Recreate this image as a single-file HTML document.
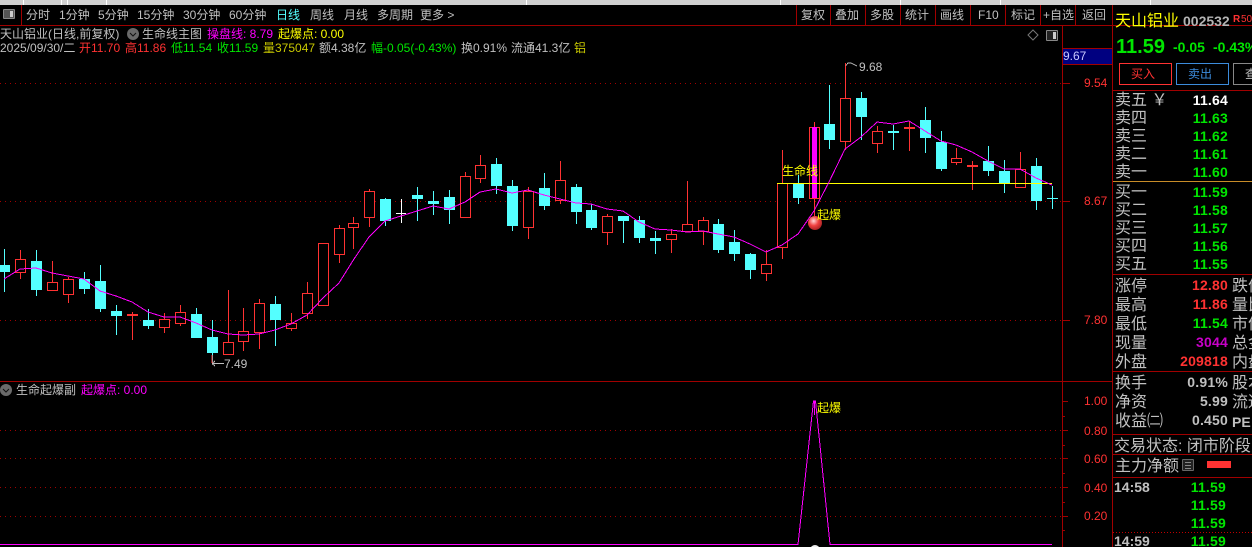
<!DOCTYPE html>
<html><head><meta charset="utf-8"><style>
html,body{margin:0;padding:0;background:#000;width:1252px;height:547px;overflow:hidden}
#p{position:relative;width:1252px;height:547px;overflow:hidden;background:#000;font:12px/16px "Liberation Sans","WenQuanYi Zen Hei","Noto Sans CJK SC",sans-serif;color:#c0c0c0}
#p span{position:absolute;white-space:nowrap}
.r{color:#ff3232}.g{color:#00e600}.y{color:#ffff00}.m{color:#ff00ff}.c{color:#54ffff}.d{color:#c8c800}
.n{font-size:16px;margin-top:1px}
.n2{font-size:16px;margin-top:2px}
.v{font-weight:bold;font-size:14px;text-align:right;width:80px;left:1148px;letter-spacing:.2px}
svg{position:absolute;left:0;top:0}
</style></head><body><div id="p">
<svg width="1252" height="547" shape-rendering="crispEdges">
<rect width="1252" height="5" fill="#d0d0d0"/>
<path d="M23.5 0V5M61.5 0V5M67.5 0V5M106.5 0V5M526.5 0V5M780.5 0V5M900.5 0V5M1000.5 0V5M1150.5 0V5" stroke="#fff"/>
<g fill="none" stroke="#a00000" stroke-dasharray="1 4">
<path d="M0 83.5H1062M0 201.5H1062M0 320.5H1062M0 430.5H1062M0 458.5H1062M0 487.5H1062M0 516.5H1062"/>
</g>
<path d="M1062.5 25V547M1112.5 25V547M0 381.5H1112M1062 48.5H1112M1062 64.5H1112M0 25.5H1252M21.5 5V25M796.5 5V25M830.5 5V25M865.5 5V25M900.5 5V25M935.5 5V25M970.5 5V25M1005.5 5V25M1040.5 5V25M1075.5 5V25M1112.5 5V25M1112 90.5H1252M1112 274.5H1252M1112 371.5H1252M1112 434.5H1252M1112 454.5H1252M1112 477.5H1252M1062 83.5H1070M1062 201.5H1070M1062 320.5H1070M1062 401.5H1068M1062 416.5H1065M1062 430.5H1068M1062 445.5H1065M1062 458.5H1068M1062 473.5H1065M1062 487.5H1068M1062 502.5H1065M1062 516.5H1068M1062 530.5H1065" stroke="#a00000" fill="none"/>
<path d="M1113 532.5H1252" stroke="#c00000" stroke-dasharray="1 2"/>
<rect x="1063" y="49" width="49" height="15" fill="#000080"/>
<path d="M1113 181.5H1252" stroke="#c88c28"/>
<!-- cyan wicks -->
<path fill="none" stroke="#54ffff" d="M4.5 249V292M36.5 250V296M84.5 272V294M100.5 265V312M116.5 305V335M148.5 309V329M196.5 308V338M212.5 320V363M275.5 296V346M385.5 198V226M417.5 187V221M433.5 191V215M449.5 190V224M496.5 158V194M512.5 180V231M544.5 173V210M576.5 184V224M591.5 204V230M623.5 216V243M639.5 216V243M655.5 231V254M718.5 219V253M734.5 230V261M750.5 253V279M798.5 175V204M829.5 85V149M861.5 92V140M893.5 125V150M925.5 107V153M941.5 131V171M988.5 146V176M1004.5 160V193M1036.5 158V210M1052.5 186V209M1047 198.5H1058"/>
<!-- cyan bodies -->
<path fill="none" stroke="#54ffff" stroke-width="11" d="M4.5 265V272M36.5 261V290M84.5 279V289M100.5 281V309M116.5 311V316M148.5 320V326M196.5 314V338M212.5 337V353M275.5 304V320M385.5 199V221M417.5 195V199M433.5 201V204M449.5 197V210M496.5 164V186M512.5 186V226M544.5 188V206M576.5 187V212M591.5 210V228M623.5 216V221M639.5 220V238M655.5 238V241M718.5 224V250M734.5 242V254M750.5 254V270M798.5 183V198M829.5 124V140M861.5 98V117M893.5 131V133M925.5 120V138M941.5 142V169M988.5 161V171M1004.5 171V183M1036.5 166V201"/>
<!-- red wicks -->
<path fill="none" stroke="#ff3232" d="M20.5 250V279M52.5 261V290M68.5 277V303M132.5 312V340M164.5 313V333M180.5 305V326M228.5 290V355M243.5 308V351M259.5 299V349M291.5 313V331M307.5 282V319M339.5 225V263M353.5 217V249M369.5 189V227M465.5 172V217M480.5 155V183M528.5 187V239M560.5 161V204M607.5 214V245M671.5 229V253M687.5 181V232M703.5 217V245M766.5 250V281M782.5 150V259M814.5 122V216M845.5 63V150M877.5 126V153M909.5 121V151M956.5 148V165M972.5 161V190M1020.5 152V187"/>
<!-- red bodies -->
<path fill="#000" stroke="#ff3232" d="M15.5 259.5h10v13h-10zM47.5 282.5h10v8h-10zM63.5 279.5h10v15h-10zM159.5 319.5h10v8h-10zM175.5 312.5h10v11h-10zM223.5 342.5h10v12h-10zM238.5 331.5h10v10h-10zM254.5 303.5h10v29h-10zM286.5 323.5h10v5h-10zM302.5 293.5h10v20h-10zM318.5 243.5h10v62h-10zM334.5 228.5h10v26h-10zM348.5 223.5h10v4h-10zM364.5 191.5h10v26h-10zM460.5 176.5h10v41h-10zM475.5 165.5h10v13h-10zM523.5 191.5h10v36h-10zM555.5 180.5h10v20h-10zM602.5 216.5h10v16h-10zM666.5 234.5h10v5h-10zM682.5 224.5h10v7h-10zM698.5 220.5h10v11h-10zM761.5 264.5h10v9h-10zM777.5 183.5h10v64h-10zM809.5 127.5h10v71h-10zM840.5 98.5h10v43h-10zM872.5 131.5h10v12h-10zM951.5 158.5h10v4h-10zM1015.5 169.5h10v18h-10z"/>
<path fill="none" stroke="#ff3232" stroke-width="2" d="M127 315H138M904 128H915M967 166H978"/>
<rect x="812" y="127" width="5" height="71" fill="#ff00ff"/>
<!-- white doji -->
<path fill="none" stroke="#fff" d="M401.5 199V223M396 213.5H406"/>
<!-- life line -->
<path fill="none" stroke="#ffff00" d="M777 183.5H1052"/>
<polyline fill="none" stroke="#ff00ff" points="4,279 20,269 36,268 52,273 68,276 84,279 100,291 116,296 132,302 148,312 164,317 180,317 196,323 212,330 228,334 243,335 259,334 275,330 291,324 307,315 323,298 339,283 354,259 369,237 385,221 401,216 417,211 433,206 449,209 465,202 480,192 496,189 512,193 528,190 544,195 560,199 576,203 591,204 607,209 623,211 639,222 655,229 671,230 687,232 703,231 718,234 734,237 750,244 766,252 782,245 798,234 814,211 829,182 845,149 861,137 877,122 893,124 909,121 925,131 941,141 956,145 972,152 988,161 1004,169 1020,169 1036,178 1052,185"/>
<!-- sub chart -->
<polyline fill="none" stroke="#ff00ff" points="0,544.5 798,544.5 813.5,401 815.5,401 830,544.5 1052,544.5"/>
<path fill="none" stroke="#ff00ff" d="M814.5 401V415" />
<defs><radialGradient id="b" cx=".4" cy=".35" r=".7"><stop offset="0" stop-color="#ffd8d8"/><stop offset=".5" stop-color="#f04040"/><stop offset="1" stop-color="#a02020"/></radialGradient></defs>
<circle cx="815" cy="223" r="7" fill="url(#b)" shape-rendering="auto"/>
<circle cx="815" cy="550" r="5" fill="#eee" shape-rendering="auto"/>
<!-- arrows -->
<path fill="none" stroke="#c0c0c0" d="M846 65.5L848 63H851L857 66M212 363.5H224M212 363.5L215 361M212 363.5L215 366"/>
<path fill="none" stroke="#ff3232" d="M212 355V363"/>
<!-- icons -->
<rect x="3.5" y="9.5" width="11" height="9" rx="1" fill="#555" stroke="#888"/><rect x="10" y="11" width="3" height="6" fill="#ccc"/>
<path d="M1033 30L1038 35L1033 40L1028 35Z" fill="none" stroke="#777" shape-rendering="auto"/>
<rect x="1046.5" y="30.5" width="11" height="10" rx="1" fill="#222" stroke="#888"/><rect x="1053" y="32" width="3" height="7" fill="#ccc"/>
<circle cx="133" cy="34" r="6" fill="#6a6a6a" shape-rendering="auto"/><path d="M130 33L133 36L136 33" fill="none" stroke="#111" shape-rendering="auto"/>
<circle cx="6" cy="390" r="6" fill="#6a6a6a" shape-rendering="auto"/><path d="M3 389L6 392L9 389" fill="none" stroke="#111" shape-rendering="auto"/>
<rect x="1182.5" y="459.5" width="11" height="11" rx="1" fill="#222" stroke="#666"/><path d="M1185 462.5H1191M1185 465.5H1191M1185 468.5H1191" stroke="#888"/>
<rect x="1207" y="461" width="24" height="7" fill="#ff3232"/>
<!-- buttons -->
<rect x="1119.5" y="63.5" width="52" height="21" fill="none" stroke="#ff3232"/>
<rect x="1176.5" y="63.5" width="52" height="21" fill="none" stroke="#3c8cdc"/>
<rect x="1233.5" y="63.5" width="30" height="21" fill="none" stroke="#888"/>
</svg>

<!-- toolbar -->
<span style="left:26px;top:7px">分时</span><span style="left:59px;top:7px">1分钟</span><span style="left:98px;top:7px">5分钟</span><span style="left:137px;top:7px">15分钟</span><span style="left:183px;top:7px">30分钟</span><span style="left:229px;top:7px">60分钟</span><span class="c" style="left:276px;top:7px">日线</span><span style="left:310px;top:7px">周线</span><span style="left:344px;top:7px">月线</span><span style="left:377px;top:7px">多周期</span><span style="left:420px;top:7px">更多 &gt;</span>
<span style="left:801px;top:7px">复权</span><span style="left:835px;top:7px">叠加</span><span style="left:870px;top:7px">多股</span><span style="left:905px;top:7px">统计</span><span style="left:940px;top:7px">画线</span><span style="left:978px;top:7px">F10</span><span style="left:1011px;top:7px">标记</span><span style="left:1043px;top:7px">+自选</span><span style="left:1082px;top:7px">返回</span>
<!-- info -->
<span style="left:0;top:26px">天山铝业(日线,前复权)</span><span style="left:142px;top:26px">生命线主图</span><span class="m" style="left:207px;top:26px">操盘线: 8.79</span><span class="y" style="left:278px;top:26px">起爆点: 0.00</span>
<span style="left:0;top:40px">2025/09/30/二</span><span class="r" style="left:79px;top:40px">开11.70</span><span class="r" style="left:125px;top:40px">高11.86</span><span class="g" style="left:171px;top:40px">低11.54</span><span class="g" style="left:217px;top:40px">收11.59</span><span class="d" style="left:263px;top:40px">量375047</span><span style="left:319px;top:40px">额4.38亿</span><span class="g" style="left:371px;top:40px">幅-0.05(-0.43%)</span><span style="left:461px;top:40px">换0.91%</span><span style="left:511px;top:40px">流通41.3亿</span><span class="d" style="left:574px;top:40px">铝</span>
<!-- chart labels -->
<span style="left:859px;top:59px">9.68</span><span style="left:224px;top:356px">7.49</span>
<span class="y" style="left:782px;top:163px">生命线</span><span class="y" style="left:817px;top:207px">起爆</span><span class="y" style="left:817px;top:400px">起爆</span>
<span style="left:1063px;top:48px;color:#c8c8ff">9.67</span>
<span class="r" style="left:1084px;top:75px">9.54</span><span class="r" style="left:1084px;top:193px">8.67</span><span class="r" style="left:1084px;top:312px">7.80</span>
<span class="r" style="left:1084px;top:393px">1.00</span><span class="r" style="left:1084px;top:423px">0.80</span><span class="r" style="left:1084px;top:451px">0.60</span><span class="r" style="left:1084px;top:480px">0.40</span><span class="r" style="left:1084px;top:508px">0.20</span>
<span style="left:16px;top:382px">生命起爆副</span><span class="m" style="left:81px;top:382px">起爆点: 0.00</span>
<!-- right header -->
<span class="n y" style="left:1115px;top:13px">天山铝业</span>
<span style="left:1183px;top:13px;font-weight:bold;font-size:14px;color:#b4b4b4">002532</span>
<span class="r" style="left:1233px;top:12px;font-weight:bold;font-size:10px">R</span><span class="r" style="left:1241px;top:12px;font-size:10px">50</span>
<span class="g" style="left:1116px;top:37px;font-weight:bold;font-size:20px;line-height:20px">11.59</span>
<span class="g" style="left:1173px;top:39px;font-weight:bold;font-size:14px">-0.05</span><span class="g" style="left:1213px;top:39px;font-weight:bold;font-size:14px">-0.43%</span>
<span class="r" style="left:1131px;top:66px">买入</span><span style="left:1188px;top:66px;color:#3c8cdc">卖出</span><span style="left:1245px;top:66px">查</span>
<!-- quotes -->
<span class="n" style="left:1115px;top:92px">卖五 ￥</span><span class="v" style="top:92px;color:#fff">11.64</span>
<span class="n" style="left:1115px;top:110px">卖四</span><span class="v g" style="top:110px">11.63</span>
<span class="n" style="left:1115px;top:128px">卖三</span><span class="v g" style="top:128px">11.62</span>
<span class="n" style="left:1115px;top:146px">卖二</span><span class="v g" style="top:146px">11.61</span>
<span class="n" style="left:1115px;top:164px">卖一</span><span class="v g" style="top:164px">11.60</span>
<span class="n" style="left:1115px;top:184px">买一</span><span class="v g" style="top:184px">11.59</span>
<span class="n" style="left:1115px;top:202px">买二</span><span class="v g" style="top:202px">11.58</span>
<span class="n" style="left:1115px;top:220px">买三</span><span class="v g" style="top:220px">11.57</span>
<span class="n" style="left:1115px;top:238px">买四</span><span class="v g" style="top:238px">11.56</span>
<span class="n" style="left:1115px;top:256px">买五</span><span class="v g" style="top:256px">11.55</span>
<span class="n2" style="left:1115px;top:277px">涨停</span><span class="v r" style="top:277px">12.80</span><span class="n2" style="left:1232px;top:277px">跌停</span>
<span class="n2" style="left:1115px;top:296px">最高</span><span class="v r" style="top:296px">11.86</span><span class="n2" style="left:1232px;top:296px">量比</span>
<span class="n2" style="left:1115px;top:315px">最低</span><span class="v g" style="top:315px">11.54</span><span class="n2" style="left:1232px;top:315px">市值</span>
<span class="n2" style="left:1115px;top:334px">现量</span><span class="v" style="top:334px;color:#c800c8">3044</span><span class="n2" style="left:1232px;top:334px">总金</span>
<span class="n2" style="left:1115px;top:353px">外盘</span><span class="v r" style="top:353px">209818</span><span class="n2" style="left:1232px;top:353px">内盘</span>
<span class="n2" style="left:1115px;top:374px">换手</span><span class="v" style="top:374px">0.91%</span><span class="n2" style="left:1232px;top:374px">股本</span>
<span class="n2" style="left:1115px;top:393px">净资</span><span class="v" style="top:393px">5.99</span><span class="n2" style="left:1232px;top:393px">流通</span>
<span class="n2" style="left:1115px;top:412px">收益㈡</span><span class="v" style="top:412px">0.450</span><span class="n2" style="left:1232px;top:412px;font-weight:bold;font-size:14px">PE</span>
<span class="n2" style="left:1114px;top:437px">交易状态: 闭市阶段</span>
<span class="n2" style="left:1115px;top:457px">主力净额</span>
<span style="left:1114px;top:479px;font-weight:bold;font-size:14px">14:58</span><span class="v g" style="left:1146px;top:479px">11.59</span>
<span class="v g" style="left:1146px;top:497px">11.59</span>
<span class="v g" style="left:1146px;top:515px">11.59</span>
<span style="left:1114px;top:533px;font-weight:bold;font-size:14px">14:59</span><span class="v g" style="left:1146px;top:533px">11.59</span>
</div></body></html>
